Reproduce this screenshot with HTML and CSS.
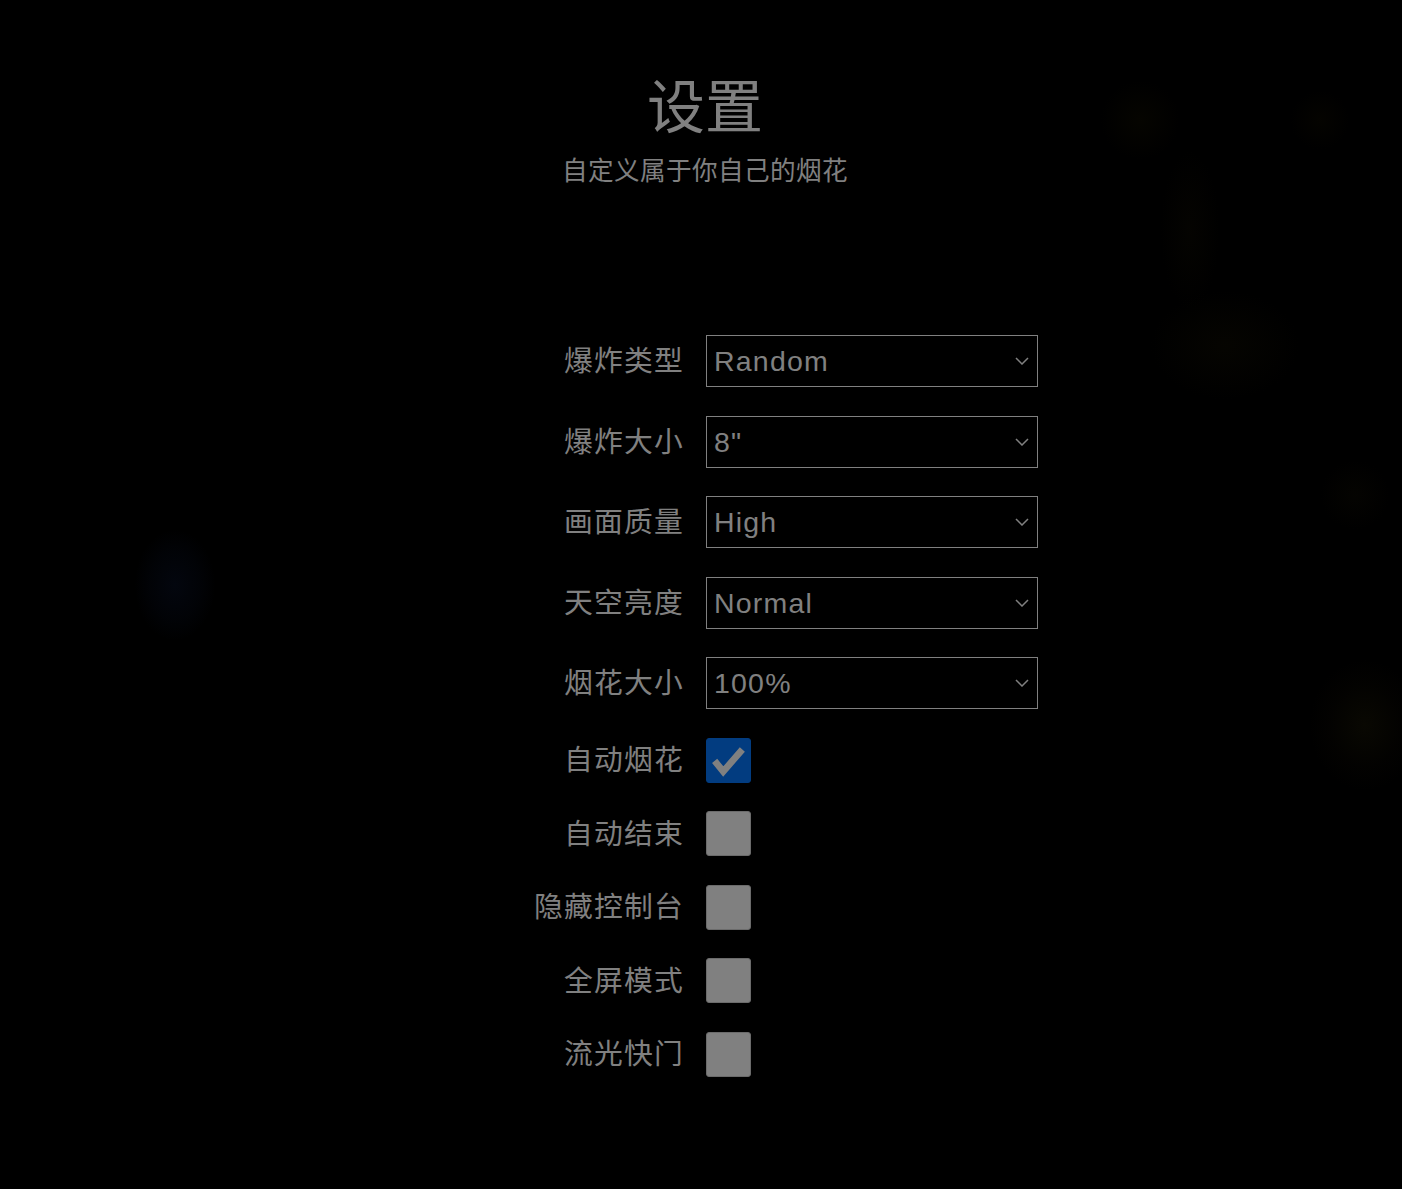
FILE: index.html
```html
<!DOCTYPE html>
<html lang="zh">
<head>
<meta charset="utf-8">
<title>设置</title>
<link rel="stylesheet" href="styles.css">
</head>
<body>
<div class="sky" aria-hidden="true">
  <span class="glow glow-blue"></span>
  <span class="glow glow-y1"></span>
  <span class="glow glow-y2"></span>
  <span class="glow glow-y3"></span>
  <span class="glow glow-y4"></span>
  <span class="glow glow-y5"></span>
  <span class="glow glow-y6"></span>
</div>
<main class="settings">
  <header class="head">
    <h1 class="title">设置</h1>
    <p class="subtitle">自定义属于你自己的烟花</p>
  </header>
  <div class="form">
    <label class="label">爆炸类型</label>
    <div class="select-wrap">
      <select class="select"><option>Random</option></select>
      <svg class="chev" viewBox="0 0 14 8"><path d="M1 1 L7 7 L13 1" /></svg>
    </div>

    <label class="label">爆炸大小</label>
    <div class="select-wrap">
      <select class="select"><option>8"</option></select>
      <svg class="chev" viewBox="0 0 14 8"><path d="M1 1 L7 7 L13 1" /></svg>
    </div>

    <label class="label">画面质量</label>
    <div class="select-wrap">
      <select class="select"><option>High</option></select>
      <svg class="chev" viewBox="0 0 14 8"><path d="M1 1 L7 7 L13 1" /></svg>
    </div>

    <label class="label">天空亮度</label>
    <div class="select-wrap">
      <select class="select"><option>Normal</option></select>
      <svg class="chev" viewBox="0 0 14 8"><path d="M1 1 L7 7 L13 1" /></svg>
    </div>

    <label class="label">烟花大小</label>
    <div class="select-wrap">
      <select class="select"><option>100%</option></select>
      <svg class="chev" viewBox="0 0 14 8"><path d="M1 1 L7 7 L13 1" /></svg>
    </div>

    <label class="label">自动烟花</label>
    <span class="check checked">
      <svg class="tick" viewBox="0 0 45 45"><path d="M8 23 L17 34 L37 11" /></svg>
    </span>

    <label class="label">自动结束</label>
    <span class="check"></span>

    <label class="label">隐藏控制台</label>
    <span class="check"></span>

    <label class="label">全屏模式</label>
    <span class="check"></span>

    <label class="label">流光快门</label>
    <span class="check"></span>
  </div>
</main>
</body>
</html>
```

FILE: styles.css
```css
html, body {
  margin: 0;
  padding: 0;
  background: #000;
}

body {
  width: 1402px;
  min-height: 1189px;
  position: relative;
  overflow: hidden;
  font-family: "Liberation Sans", "Noto Sans CJK SC", sans-serif;
  color: #808080;
}

.sky {
  position: absolute;
  inset: 0;
  z-index: 0;
}

.glow {
  position: absolute;
  border-radius: 50%;
}

.glow-blue {
  left: 135px;
  top: 530px;
  width: 80px;
  height: 110px;
  background: radial-gradient(ellipse at center, rgba(3, 6, 14, 1) 0%, rgba(2, 4, 9, 0.7) 45%, rgba(0, 0, 0, 0) 72%);
}

.glow-y1 {
  left: 1100px;
  top: 80px;
  width: 80px;
  height: 80px;
  background: radial-gradient(circle, rgba(6, 5, 0, 0.9) 0%, rgba(0, 0, 0, 0) 70%);
}

.glow-y2 {
  left: 1290px;
  top: 90px;
  width: 60px;
  height: 60px;
  background: radial-gradient(circle, rgba(5, 4, 0, 0.9) 0%, rgba(0, 0, 0, 0) 70%);
}

.glow-y3 {
  left: 1160px;
  top: 150px;
  width: 60px;
  height: 160px;
  background: radial-gradient(ellipse, rgba(5, 4, 1, 0.9) 0%, rgba(0, 0, 0, 0) 70%);
}

.glow-y4 {
  left: 1150px;
  top: 290px;
  width: 150px;
  height: 110px;
  background: radial-gradient(ellipse, rgba(6, 5, 1, 0.9) 0%, rgba(0, 0, 0, 0) 70%);
}

.glow-y5 {
  left: 1320px;
  top: 460px;
  width: 70px;
  height: 70px;
  background: radial-gradient(circle, rgba(5, 4, 1, 0.9) 0%, rgba(0, 0, 0, 0) 70%);
}

.glow-y6 {
  left: 1310px;
  top: 660px;
  width: 110px;
  height: 130px;
  background: radial-gradient(ellipse, rgba(9, 8, 2, 1) 0%, rgba(4, 3, 1, 0.7) 45%, rgba(0, 0, 0, 0) 72%);
}

.settings {
  position: relative;
  z-index: 1;
  display: flex;
  flex-direction: column;
  align-items: center;
  padding-top: 79px;
}

.head {
  display: flex;
  flex-direction: column;
  align-items: center;
}

.title {
  margin: 0;
  font-size: 58px;
  line-height: 58px;
  font-weight: 400;
  color: #808080;
  transform: translateX(4px);
}

.subtitle {
  margin: 21px 0 0;
  font-size: 25.6px;
  line-height: 26px;
  letter-spacing: 0.4px;
  color: #808080;
  transform: translateX(4px);
}

.form {
  margin-top: 151px;
  display: grid;
  grid-template-columns: 319px 332px;
  column-gap: 23px;
  row-gap: 28.5px;
  align-items: center;
}

.label {
  justify-self: end;
  font-size: 28.8px;
  letter-spacing: 1.2px;
  line-height: 32px;
  color: #808080;
  margin-right: -1px;
}

.select-wrap {
  position: relative;
  width: 332px;
  height: 52px;
}

.select {
  appearance: none;
  -webkit-appearance: none;
  box-sizing: border-box;
  width: 100%;
  height: 52px;
  margin: 0;
  padding: 0 40px 0 7px;
  background: transparent;
  border: 1px solid #808080;
  border-radius: 0;
  color: #808080;
  font-family: "Liberation Sans", "Noto Sans CJK SC", sans-serif;
  font-size: 28.5px;
  letter-spacing: 1.2px;
  outline: none;
}

.chev {
  position: absolute;
  right: 9px;
  top: 22px;
  width: 14px;
  height: 8px;
  fill: none;
  stroke: #808080;
  stroke-width: 1.5;
  pointer-events: none;
}

.check {
  box-sizing: border-box;
  width: 45px;
  height: 45px;
  border-radius: 3px;
  background: #808080;
  border: 1px solid #6b6b6b;
  display: block;
}

.check.checked {
  background: #023c80;
  border-color: #023c80;
}

.tick {
  display: block;
  width: 43px;
  height: 43px;
  fill: none;
  stroke: #808080;
  stroke-width: 7;
  stroke-linecap: butt;
  stroke-linejoin: miter;
}
```
